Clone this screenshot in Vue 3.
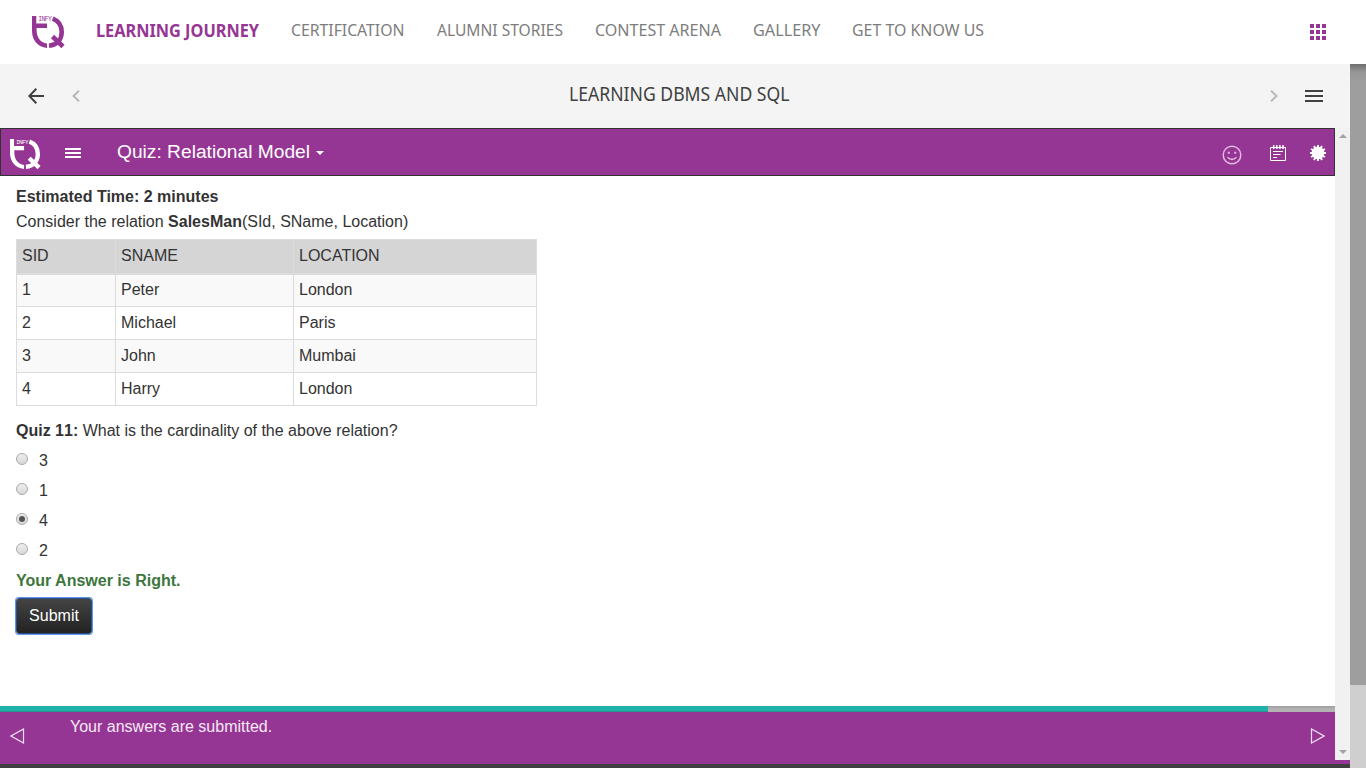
<script setup>
import { ref } from 'vue'

const nav = [
  { label: 'LEARNING JOURNEY', width: 163, active: true },
  { label: 'CERTIFICATION', width: 113.5 },
  { label: 'ALUMNI STORIES', width: 126 },
  { label: 'CONTEST ARENA', width: 126 },
  { label: 'GALLERY', width: 67.5 },
  { label: 'GET TO KNOW US', width: 132 }
]
const rows = [
  [1, 'Peter', 'London'],
  [2, 'Michael', 'Paris'],
  [3, 'John', 'Mumbai'],
  [4, 'Harry', 'London']
]
const options = ['3', '1', '4', '2']
const picked = ref('4')
const grid = [0, 6, 12]
const teeth = [0, 30, 60, 90, 120, 150]
const logos = {
  stem: 'M0 0H4.3V7.5H15V12H4.6V14C4.6 21 8 26.5 15 27.6V32C5.500 31 0 24 0 15Z',
  ring: 'M20.700 2.600C26.500 4.800 29.700 10 29.700 16C29.700 23.500 25 29 17 29.700',
  tail: 'M20.500 20.500L31 30.500'
}
</script>

<template>
  <div class="page">
    <header class="top">
      <svg class="logo" viewBox="0 0 32 32">
        <path :d="logos.stem" fill="currentColor" />
        <path :d="logos.ring" fill="none" stroke="currentColor" stroke-width="4.6" />
        <path :d="logos.tail" fill="none" stroke="currentColor" stroke-width="4.6" />
        <text class="infy" x="6.300" y="5.200" textLength="13.5">INFY</text>
      </svg>
      <nav class="nav">
        <svg v-for="n in nav" :key="n.label" class="item" :class="{ active: n.active }" :width="n.width" height="28">
          <text x="0" y="20" :textLength="n.width" lengthAdjust="spacingAndGlyphs">{{ n.label }}</text>
        </svg>
      </nav>
      <svg class="apps" width="16" height="16">
        <template v-for="y in grid" :key="y">
          <rect v-for="x in grid" :key="x" :x="x" :y="y" width="4" height="4" />
        </template>
      </svg>
    </header>

    <div class="body">
      <div class="main">
        <div class="course">
          <svg class="back" width="16" height="16" fill="none" stroke="#404040" stroke-width="2"><path d="M16 8H1.500M8.300.7L1.300 8L8.300 15.300" /></svg>
          <svg class="prev" width="8" height="12" fill="none" stroke="#b8b8b8" stroke-width="2"><path d="M7 .7L1.500 6L7 11.300" /></svg>
          <svg class="title" width="221" height="30">
            <text x="0" y="20" textLength="220.5" lengthAdjust="spacingAndGlyphs">LEARNING DBMS AND SQL</text>
          </svg>
          <svg class="next" width="8" height="12" fill="none" stroke="#b8b8b8" stroke-width="2"><path d="M1 .7L6.500 6L1 11.300" /></svg>
          <svg class="menu" width="18" height="12" fill="#404040"><path d="M0 0H18V2H0ZM0 5H18V7H0ZM0 10H18V12H0Z" /></svg>
        </div>

        <div class="frame">
          <div class="lesson">
            <div class="bar">
              <svg class="mini" viewBox="0 0 32 32">
                <path :d="logos.stem" fill="currentColor" />
                <path :d="logos.ring" fill="none" stroke="currentColor" stroke-width="4.6" />
                <path :d="logos.tail" fill="none" stroke="currentColor" stroke-width="4.6" />
                <text class="infy" x="6.300" y="5.200" textLength="13.5">INFY</text>
              </svg>
              <svg class="burger" width="16" height="10" fill="#fff"><path d="M0 0H16V2H0ZM0 4H16V6H0ZM0 8H16V10H0Z" /></svg>
              <span class="quiz">Quiz: Relational Model</span>
              <span class="caret"></span>
              <svg class="smile" width="20" height="20" fill="none" stroke="#dfb9df" stroke-width="1.5">
                <circle cx="10" cy="10" r="8.800" />
                <path d="M5.500 12.300Q10 16.500 14.500 12.300" />
                <path d="M5.800 7.700H7.800M12.200 7.700H14.200" stroke-width="2" />
              </svg>
              <svg class="note" width="16" height="16" fill="none" stroke="#fff">
                <path d="M.5 2.500H15.500V15.500H.5Z" />
                <path d="M3.700 0V4M6.800 0V4M9.900 0V4M13 0V4" stroke-width="1.500" />
                <path d="M3 6.500H13M3 9.500H10.500M3 12.500H7" />
              </svg>
              <svg class="gear" width="16" height="16" fill="#fff">
                <circle cx="8" cy="8" r="6.200" />
                <rect v-for="a in teeth" :key="a" x="7" y="0" width="2" height="16" :transform="`rotate(${a} 8 8)`" />
              </svg>
            </div>

            <div class="content">
              <p><b>Estimated Time: 2 minutes</b></p>
              <p>Consider the relation <b>SalesMan</b>(SId, SName, Location)</p>
              <table>
                <colgroup><col class="c1"><col class="c2"><col class="c3"></colgroup>
                <thead><tr><th>SID</th><th>SNAME</th><th>LOCATION</th></tr></thead>
                <tbody>
                  <tr v-for="r in rows" :key="r[0]"><td v-for="(c, i) in r" :key="i">{{ c }}</td></tr>
                </tbody>
              </table>
              <p class="question"><b>Quiz 11:</b> What is the cardinality of the above relation?</p>
              <div v-for="o in options" :key="o" class="option" @click="picked = o">
                <span class="radio" :class="{ on: picked === o }"></span>
                <span>{{ o }}</span>
              </div>
              <p class="right">Your Answer is Right.</p>
              <button class="submit">Submit</button>
            </div>

            <div class="progress"><div class="done"></div></div>
            <footer class="foot">
              <svg class="fprev" width="15" height="16" fill="none" stroke="#f0dff0" stroke-width="1.200"><path d="M13.500 1V15L1 8Z" /></svg>
              <span class="msg">Your answers are submitted.</span>
              <svg class="fnext" width="15" height="16" fill="none" stroke="#f0dff0" stroke-width="1.200"><path d="M1.500 1V15L14 8Z" /></svg>
            </footer>
          </div>
          <div class="inner-scroll"><i class="up"></i><i class="down"></i></div>
        </div>
        <div class="under"></div>
        <div class="base"></div>
      </div>
      <div class="outer-scroll"><div class="thumb"></div></div>
    </div>
  </div>
</template>

<style>
html, body { overflow: hidden; }
</style>

<style scoped>
* { box-sizing: border-box; }
.page { width: 1366px; height: 768px; display: flex; flex-direction: column; background: #fff; font: 16px/20px "Liberation Sans", Arial, sans-serif; color: #333; overflow: hidden; }
svg { display: block; flex: none; }
.top { height: 64px; flex: none; display: flex; align-items: flex-start; }
.logo { width: 32px; height: 32px; margin: 16px 0 0 32px; color: #963694; overflow: visible; }
.infy { font: 6.5px "Liberation Mono", monospace; fill: currentColor; }
.nav { display: flex; gap: 32px; margin: 16px 0 0 32px; }
.item { overflow: visible; font: 16.5px "Noto Sans", sans-serif; fill: #7d7d7d; }
.item.active { font-size: 17.5px; font-weight: 700; fill: #963694; }
.item.active text { transform: translateY(1px); }
.apps { margin: 24px 40px 0 auto; fill: #963694; }
.body { display: flex; height: 704px; }
.main { width: 1350px; display: flex; flex-direction: column; }
.course { height: 64px; flex: none; background: #f4f4f4; display: flex; align-items: center; }
.back { margin-left: 28px; }
.prev { margin-left: 28px; }
.title { margin-left: 488.5px; overflow: visible; font: 19px "Noto Sans", sans-serif; fill: #404040; }
.next { margin-left: auto; }
.menu { margin: 0 27px 0 27px; }
.frame { display: flex; height: 632px; }
.lesson { width: 1335px; display: flex; flex-direction: column; }
.bar { height: 48px; flex: none; background: #963694; border: 1px solid #333; display: flex; align-items: flex-start; color: #fff; }
.mini { width: 30px; height: 30px; margin: 10px 0 0 9px; overflow: visible; }
.burger { margin: 19px 0 0 25px; }
.quiz { margin: 11px 0 0 36px; width: 193px; font-size: 19.2px; line-height: 24px; white-space: nowrap; }
.caret { margin: 22px 0 0 6px; border: 4px solid transparent; border-top-color: #fff; border-bottom: 0; }
.smile { margin: 16px 0 0 auto; }
.note { margin: 16px 0 0 28px; }
.gear { margin: 16px 8px 0 24px; }
.content { flex: 1; padding: 8px 16px 0; line-height: 25px; }
p { margin: 0; }
table { margin-top: 5px; width: 521px; table-layout: fixed; border-collapse: collapse; }
.c1 { width: 99px; }
.c2 { width: 178px; }
th, td { border: 1px solid #dcdcdc; height: 33px; padding: 0 5px; text-align: left; font-weight: 400; line-height: 24px; vertical-align: middle; }
th { background: #d5d5d5; height: 34px; }
thead tr { border-bottom: 2px solid #dcdcdc; }
tbody tr:nth-child(odd) { background: #f9f9f9; }
.question { margin-top: 12px; margin-bottom: 3px; }
.question b { font-kerning: none; }
.option { height: 30px; display: flex; align-items: center; gap: 11px; line-height: 30px; }
.radio { width: 12px; height: 12px; margin-top: -4px; border-radius: 50%; border: 1px solid #aaa; background: linear-gradient(#eee, #d8d8d8); display: flex; align-items: center; justify-content: center; }
.radio.on::after { content: ""; width: 6px; height: 6px; border-radius: 50%; background: #555; }
.right { color: #3c763d; font-weight: 700; line-height: 30px; }
.submit { display: block; margin-top: 2px; width: 76px; height: 36px; padding: 0; border: 1px solid #2e4f84; border-radius: 3px; background: linear-gradient(#444, #222); color: #fff; font: 16px "Liberation Sans", Arial, sans-serif; box-shadow: 0 0 0 1px #5c96ea; }
.progress { height: 6px; flex: none; background: linear-gradient(#9d9d9d, #b3b3b3 50%); }
.done { width: 1268px; height: 6px; background: #20b2aa; border-bottom: 1px solid #26958f; }
.foot { height: 48px; flex: none; background: #963694; display: flex; align-items: flex-start; color: #f4e8f4; }
.fprev { margin: 16px 0 0 10px; }
.msg { margin: 5px 0 0 45px; }
.fnext { margin: 16px 10px 0 auto; }
.inner-scroll { width: 15px; background: #f1f1f1; display: flex; flex-direction: column; align-items: center; justify-content: space-between; padding: 6px 0; }
.up, .down { border: 4px solid transparent; }
.up { border-top: 0; border-bottom-color: #a3a3a3; }
.down { border-bottom: 0; border-top-color: #a3a3a3; }
.under { height: 4px; background: #963694; }
.base { height: 4px; background: #404040; }
.outer-scroll { width: 16px; background: #cfcfcf; }
.thumb { height: 621px; background: linear-gradient(#6e6e6e, #969696 8px, #9e9e9e 18px); }
</style>
